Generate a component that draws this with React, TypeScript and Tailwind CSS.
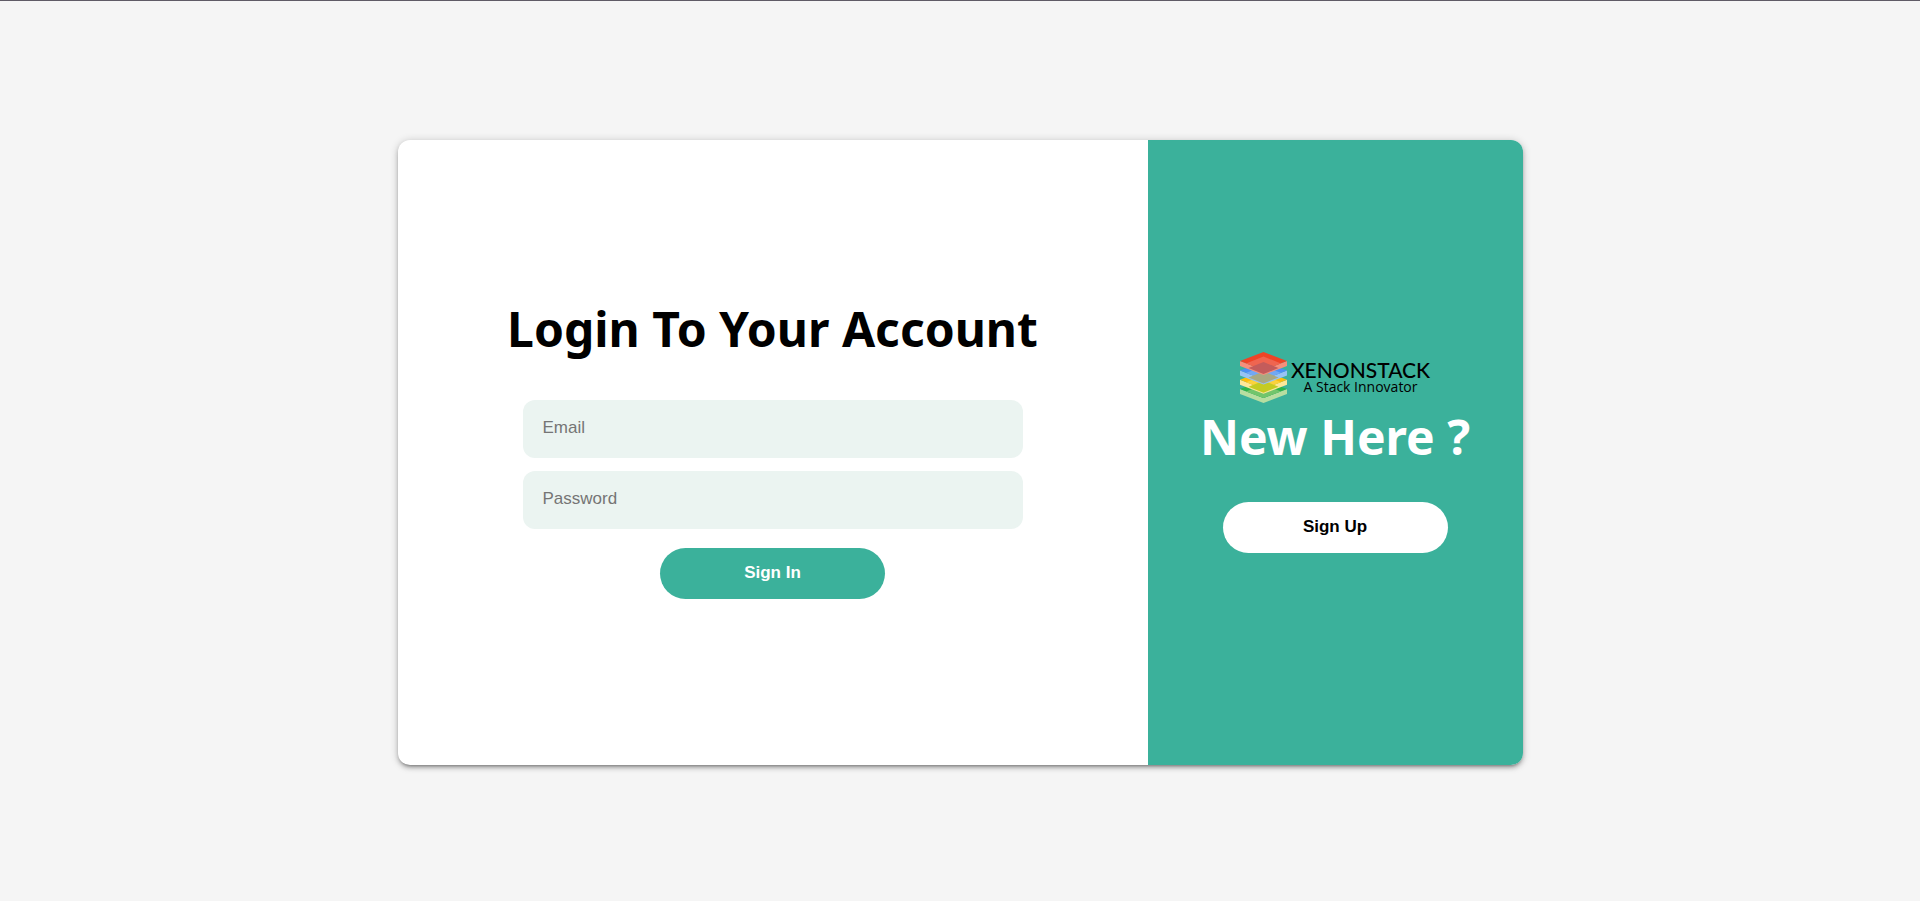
import React from "react";

const headingClass = "font-['Noto_Sans','Open_Sans',sans-serif] text-5xl font-bold whitespace-nowrap";

const fieldClass =
  "block h-[58px] w-full rounded-xl bg-[#ebf4f1] px-5 pb-0.5 text-[17px] text-black placeholder:text-[#757575] outline-none";

const buttonClass =
  "block h-[51px] w-full max-w-[225px] cursor-pointer rounded-full text-[17px] font-bold";

type LayerProps = { y: number; top: string; face: string; edge: string };

function Layer({ y, top, face, edge }: LayerProps) {
  return (
    <g transform={`translate(0 ${y})`}>
      <path d="M0 9V14L23.5 23 47 14V9L23.5 18Z" fill={edge} />
      <path d="M0 9 23.5 0 47 9 23.5 18Z" fill={top} />
      <path d="M6 11.5 23.5 4.5 41 11.5 23.5 18Z" fill={face} />
    </g>
  );
}

function Lens({ y, fill }: { y: number; fill: string }) {
  return <path transform={`translate(0 ${y})`} d="M8.5 16 23.5 10 38.5 16 23.5 22Z" fill={fill} />;
}

function Logo() {
  return (
    <div className="flex h-[52px] items-center gap-1 text-black">
      <svg viewBox="0 0 47 52" className="h-[52px] w-[47px] shrink-0" aria-hidden="true">
        <Layer y={28} top="#2db34a" face="#72c56c" edge="#b7dea0" />
        <Layer y={18.7} top="#fdbc0b" face="#fbd23c" edge="#fce79a" />
        <Lens y={18.7} fill="#c5cb22" />
        <Layer y={9.4} top="#4b8ff5" face="#72a8f4" edge="#97c3f4" />
        <Lens y={9.4} fill="#a9a982" />
        <Layer y={0} top="#ee4426" face="#ef6550" edge="#f58f7c" />
        <Lens y={0} fill="#c45c5b" />
      </svg>
      <div className="flex flex-col items-center">
        <span className="font-['Lato',sans-serif] text-[21px] leading-[18px] font-medium">XENONSTACK</span>
        <span className="font-['Open_Sans','Noto_Sans',sans-serif] text-[14px] leading-4">A Stack Innovator</span>
      </div>
    </div>
  );
}

export default function App() {
  return (
    <div className="flex min-h-screen flex-col border-t border-[#5f5b66] bg-[#f5f5f5] font-['Liberation_Sans',Arial,sans-serif]">
      <main className="flex flex-1 items-center justify-center px-4 pt-0.5">
        <div className="flex min-h-[625px] w-full max-w-[1125px] overflow-hidden rounded-xl bg-white shadow-[0_3px_3px_-2px_rgba(0,0,0,0.3),0_3px_4px_0_rgba(0,0,0,0.18),0_1px_8px_0_rgba(0,0,0,0.2)]">
          <section className="flex flex-2 flex-col items-center justify-center">
            <h1 className={`${headingClass} leading-[46px] text-black`}>Login To Your Account</h1>
            <form
              className="mt-12 flex w-full max-w-[500px] flex-col items-center"
              onSubmit={(event) => event.preventDefault()}
            >
              <input type="email" aria-label="Email" placeholder="Email" className={fieldClass} />
              <input
                type="password"
                aria-label="Password"
                placeholder="Password"
                className={`${fieldClass} mt-[13px]`}
              />
              <button type="submit" className={`${buttonClass} mt-[19px] bg-[#3bb19b] text-white`}>
                Sign In
              </button>
            </form>
          </section>
          <aside className="flex flex-1 flex-col items-center justify-center bg-[#3bb19b]">
            <Logo />
            <h2 className={`${headingClass} leading-[66px] text-white`}>New Here ?</h2>
            <button type="button" className={`${buttonClass} mt-8 bg-white text-black`}>
              Sign Up
            </button>
          </aside>
        </div>
      </main>
    </div>
  );
}
